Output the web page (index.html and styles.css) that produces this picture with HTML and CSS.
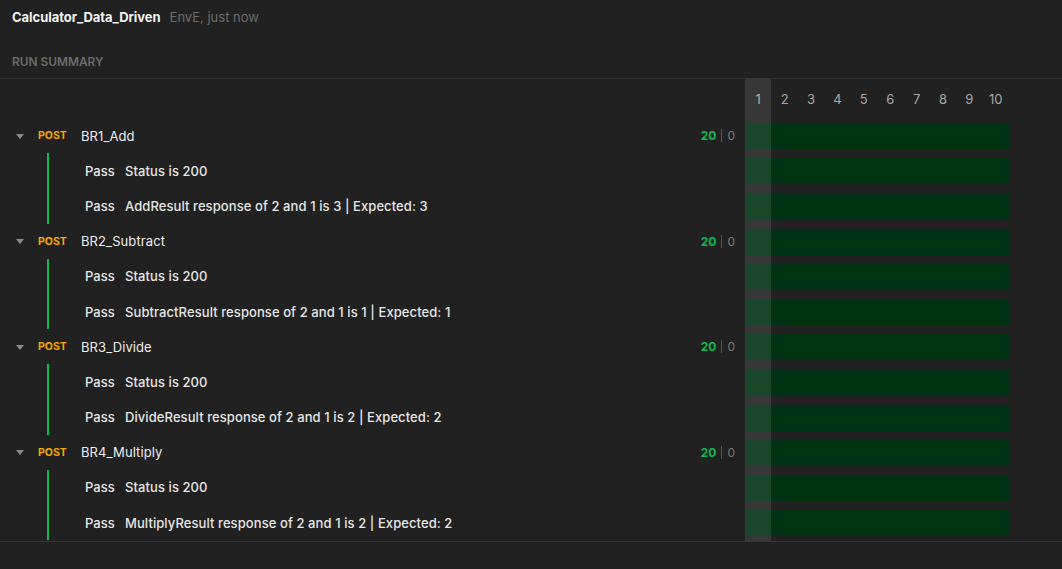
FILE: index.html
```html
<!DOCTYPE html>
<html>
<head>
<meta charset="utf-8">
<link rel="stylesheet" href="styles.css">
</head>
<body>
<div class="page">
  <header class="top">
    <span class="title">Calculator_Data_Driven</span>
    <span class="meta">EnvE, just now</span>
  </header>
  <div class="section-label">RUN SUMMARY</div>
  <div class="body">
    <div class="tree">
      <div class="tree-head"></div>

      <div class="req">
        <span class="caret"></span><span class="method">POST</span><span class="name">BR1_Add</span>
        <span class="counts"><span class="pass-count">20</span><span class="sep"></span><span class="fail-count">0</span></span>
      </div>
      <div class="tests">
        <div class="test"><span class="status">Pass</span><span class="tname">Status is 200</span></div>
        <div class="test"><span class="status">Pass</span><span class="tname">AddResult response of 2 and 1 is 3 | Expected: 3</span></div>
      </div>

      <div class="req">
        <span class="caret"></span><span class="method">POST</span><span class="name">BR2_Subtract</span>
        <span class="counts"><span class="pass-count">20</span><span class="sep"></span><span class="fail-count">0</span></span>
      </div>
      <div class="tests">
        <div class="test"><span class="status">Pass</span><span class="tname">Status is 200</span></div>
        <div class="test"><span class="status">Pass</span><span class="tname">SubtractResult response of 2 and 1 is 1 | Expected: 1</span></div>
      </div>

      <div class="req">
        <span class="caret"></span><span class="method">POST</span><span class="name">BR3_Divide</span>
        <span class="counts"><span class="pass-count">20</span><span class="sep"></span><span class="fail-count">0</span></span>
      </div>
      <div class="tests">
        <div class="test"><span class="status">Pass</span><span class="tname">Status is 200</span></div>
        <div class="test"><span class="status">Pass</span><span class="tname">DivideResult response of 2 and 1 is 2 | Expected: 2</span></div>
      </div>

      <div class="req">
        <span class="caret"></span><span class="method">POST</span><span class="name">BR4_Multiply</span>
        <span class="counts"><span class="pass-count">20</span><span class="sep"></span><span class="fail-count">0</span></span>
      </div>
      <div class="tests">
        <div class="test"><span class="status">Pass</span><span class="tname">Status is 200</span></div>
        <div class="test"><span class="status">Pass</span><span class="tname">MultiplyResult response of 2 and 1 is 2 | Expected: 2</span></div>
      </div>
    </div>

    <div class="grid">
      <div class="col-highlight"></div>
      <div class="grid-head">
        <span>1</span><span>2</span><span>3</span><span>4</span><span>5</span>
        <span>6</span><span>7</span><span>8</span><span>9</span><span>10</span>
      </div>
      <div class="grow"><div class="bar"></div></div>
      <div class="grow"><div class="bar"></div></div>
      <div class="grow"><div class="bar"></div></div>
      <div class="grow"><div class="bar"></div></div>
      <div class="grow"><div class="bar"></div></div>
      <div class="grow"><div class="bar"></div></div>
      <div class="grow"><div class="bar"></div></div>
      <div class="grow"><div class="bar"></div></div>
      <div class="grow"><div class="bar"></div></div>
      <div class="grow"><div class="bar"></div></div>
      <div class="grow"><div class="bar"></div></div>
      <div class="grow"><div class="bar"></div></div>
    </div>
  </div>
</div>
</body>
</html>
```

FILE: styles.css
```css
* { box-sizing: border-box; }
html, body {
  margin: 0;
  padding: 0;
  background: #212121;
  height: 100%;
}
body {
  font-family: Inter, "Noto Sans", "Liberation Sans", sans-serif;
  font-size: 13px;
  color: #e6e6e6;
}
.page {
  width: 1062px;
  height: 569px;
  background: #212121;
}
.top {
  height: 34px;
  line-height: 34px;
  padding-left: 12px;
  display: flex;
  gap: 9px;
  align-items: baseline;
}
.title {
  font-weight: 700;
  color: #f2f2f2;
  letter-spacing: -0.05px;
}
.meta {
  color: #6b6b6b;
}
.section-label {
  padding: 21px 12px 9px;
  line-height: 14px;
  font-size: 11.9px;
  font-weight: 600;
  color: #6b6b6b;
  border-bottom: 1px solid #353535;
}
.body {
  display: flex;
  height: 463px;
  border-bottom: 1px solid #353535;
}
.tree {
  width: 745px;
  flex: none;
}
.tree-head {
  height: 39px;
}
.req {
  height: 35.2px;
  display: flex;
  align-items: center;
  padding-left: 16px;
  padding-right: 10px;
}
.caret {
  width: 0;
  height: 0;
  border-left: 4px solid transparent;
  border-right: 4px solid transparent;
  border-top: 5px solid #8a8a8a;
  margin-right: 14px;
  margin-top: 1px;
}
.method {
  font-size: 10.5px;
  font-weight: 700;
  color: #f4a900;
  width: 43px;
}
.name {
  color: #ededed;
  letter-spacing: 0.1px;
}
.counts {
  margin-left: auto;
  display: flex;
  align-items: center;
  font-size: 12px;
}
.pass-count {
  color: #0cbb52;
  font-weight: 700;
}
.sep {
  width: 1px;
  height: 13px;
  background: #555;
  margin: 0 5px;
}
.fail-count {
  color: #7a7a7a;
}
.tests {
  margin-left: 47px;
  border-left: 2px solid #0cbb52;
}
.test {
  height: 35.2px;
  display: flex;
  align-items: center;
  padding-left: 36px;
}
.status {
  width: 40px;
  color: #e6e6e6;
  font-weight: 500;
}
.tname {
  color: #e6e6e6;
  font-weight: 500;
  letter-spacing: 0.08px;
}
.grid {
  width: 264px;
  flex: none;
  position: relative;
}
.col-highlight {
  position: absolute;
  left: 0;
  top: 0;
  bottom: 0;
  width: 26.4px;
  background: rgba(255, 255, 255, 0.1);
  pointer-events: none;
}
.grid-head {
  height: 39px;
  display: grid;
  grid-template-columns: repeat(10, 1fr);
  align-items: center;
  color: #a6a6a6;
  font-size: 13px;
}
.grid-head span {
  text-align: center;
}
.grow {
  height: 35.2px;
  padding-top: 5px;
}
.bar {
  height: 26px;
  background: #003314;
}
```
